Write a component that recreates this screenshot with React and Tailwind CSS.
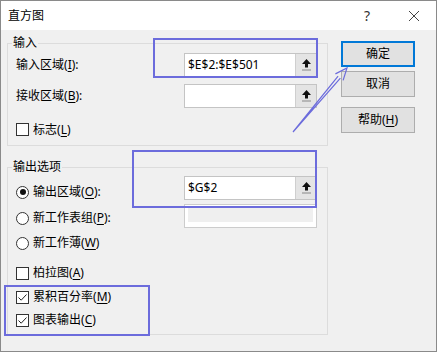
const font = { fontFamily: '"Noto Sans", "Noto Sans CJK SC", sans-serif' }

const UpIcon = () => (
  <svg width="9" height="12" viewBox="0 0 9 12">
    <path d="M4.5 0 L9 5 H6 V8.5 H3 V5 H0 Z" fill="#111" />
    <rect x="0" y="10.5" width="9" height="1" fill="#888" />
  </svg>
)

const RefField = ({ value }) => (
  <div className="flex h-[24px] w-[133px] border border-[#c4c4c4] bg-white">
    <div className="flex flex-1 items-center pl-[3px] text-[12px] leading-[16px] text-black">{value}</div>
    <div className="flex w-[21px] items-center justify-center border-l border-[#cfcfcf] bg-[#e4e4e4]">
      <UpIcon />
    </div>
  </div>
)

const DisabledField = () => (
  <div className="flex h-[24px] w-[133px] border border-[#cccccc] bg-white p-[3px] pb-[5px]">
    <div className="flex-1 bg-[#efefef]" />
  </div>
)

const Check = ({ checked }) => (
  <div className="flex h-[13px] w-[13px] items-center justify-center border border-[#333] bg-white">
    {checked && (
      <svg width="11" height="11" viewBox="0 0 11 11">
        <path d="M1.5 5.5 L4.2 8.2 L9.5 2.5" fill="none" stroke="#222" strokeWidth="1" />
      </svg>
    )}
  </div>
)

const Radio = ({ checked }) => (
  <div className="flex h-[13px] w-[13px] items-center justify-center rounded-full border border-[#333] bg-white">
    {checked && <div className="h-[6px] w-[6px] rounded-full bg-[#111]" />}
  </div>
)

const Label = ({ text, k, tail = '' }) => (
  <span className="text-[12px] leading-[16px] text-black">
    {text}(<span className="underline underline-offset-2">{k}</span>){tail}
  </span>
)

const Option = ({ control, children }) => (
  <div className="flex h-[16px] items-center gap-[4px]">
    {control}
    {children}
  </div>
)

const Button = ({ children, primary, className = '' }) => (
  <div
    className={`flex h-[26px] w-[74px] items-center justify-center bg-[#e1e1e1] text-[12px] text-black ${
      primary ? 'border-2 border-[#0078d7]' : 'border border-[#adadad]'
    } ${className}`}
  >
    {children}
  </div>
)

const App = () => {
  return (
    <div style={font} className="relative flex h-[352px] w-[437px] flex-col border border-[#8a8a8a] bg-[#f0f0f0]">
      <div className="flex h-[29px] items-center bg-white pl-[7px] text-[12px] text-black">
        <span className="flex-1">直方图</span>
        <span className="mr-[38px] text-[14px] text-[#333]">?</span>
        <svg width="12" height="12" viewBox="0 0 12 12" className="mr-[16px]">
          <path d="M1 1 L11 11 M11 1 L1 11" stroke="#444" strokeWidth="1" />
        </svg>
      </div>

      <div className="flex flex-1 pl-[6px]">
        <div className="flex w-[321px] flex-col">
          <fieldset className="mt-[5px] w-full border border-[#dcdcdc]">
            <legend className="ml-[4px] px-[1px] text-[12px] leading-[16px] text-black">输入</legend>
            <div className="flex flex-col pb-[9px] pl-[8px] pr-[10px] pt-[2px]">
              <div className="flex h-[24px] items-center justify-between">
                <Label text="输入区域" k="I" tail=":" />
                <RefField value="$E$2:$E$501" />
              </div>
              <div className="mt-[7px] flex h-[24px] items-center justify-between">
                <Label text="接收区域" k="B" tail=":" />
                <RefField value="" />
              </div>
              <div className="mt-[15px] flex h-[13px] items-center gap-[4px]">
                <Check />
                <Label text="标志" k="L" />
              </div>
            </div>
          </fieldset>

          <fieldset className="mt-[13px] w-full border border-[#dcdcdc]">
            <legend className="ml-[4px] px-[1px] text-[12px] leading-[16px] text-black">输出选项</legend>
            <div className="flex flex-col pb-[6px] pl-[8px] pr-[10px] pt-[1px]">
              <div className="flex h-[24px] items-start justify-between">
                <div className="pt-[8px]">
                  <Option control={<Radio checked />}>
                    <Label text="输出区域" k="O" tail=":" />
                  </Option>
                </div>
                <RefField value="$G$2" />
              </div>
              <div className="mt-[4px] flex h-[24px] items-start justify-between">
                <div className="pt-[6px]">
                  <Option control={<Radio />}>
                    <Label text="新工作表组" k="P" tail=":" />
                  </Option>
                </div>
                <DisabledField />
              </div>
              <div className="mt-[7px]">
                <Option control={<Radio />}>
                  <Label text="新工作薄" k="W" />
                </Option>
              </div>
              <div className="mt-[14px]">
                <Option control={<Check />}>
                  <Label text="柏拉图" k="A" />
                </Option>
              </div>
              <div className="mt-[8px]">
                <Option control={<Check checked />}>
                  <Label text="累积百分率" k="M" />
                </Option>
              </div>
              <div className="mt-[7px]">
                <Option control={<Check checked />}>
                  <Label text="图表输出" k="C" />
                </Option>
              </div>
            </div>
          </fieldset>
        </div>

        <div className="ml-[13px] flex flex-col pt-[11px]">
          <Button primary>确定</Button>
          <Button className="mt-[4px]">取消</Button>
          <Button className="mt-[10px]">
            <span>
              帮助(<span className="underline underline-offset-2">H</span>)
            </span>
          </Button>
        </div>
      </div>

      {/* annotation marks drawn over the dialog */}
      <div className="pointer-events-none absolute left-[152px] top-[37px] h-[40px] w-[165px] border-2 border-[#6c6cdc]" />
      <div className="pointer-events-none absolute left-[131px] top-[149px] h-[58px] w-[185px] border-2 border-[#6c6cdc]" />
      <div className="pointer-events-none absolute left-[3px] top-[284px] h-[51px] w-[146px] border-2 border-[#6c6cdc]" />
      <svg className="pointer-events-none absolute left-[284px] top-[59px]" width="70" height="80" viewBox="0 0 70 80">
        <path d="M8 72 L55.4 18.2 M8 72 L53.1 16.2" fill="none" stroke="#6c6cdc" strokeWidth="1.2" />
        <path d="M58.1 20.4 L62 8 L50.4 13.9" fill="none" stroke="#6c6cdc" strokeWidth="1.2" />
      </svg>
    </div>
  )
}

export default App
